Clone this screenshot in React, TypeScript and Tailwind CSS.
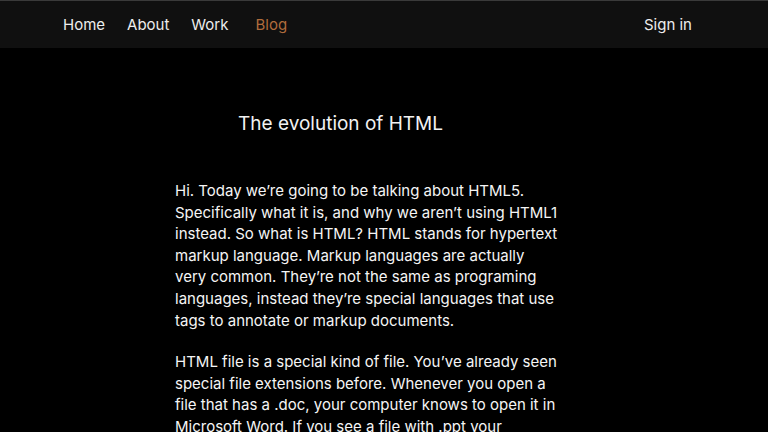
const navLinks = [
  { label: 'Home', gap: '' },
  { label: 'About', gap: 'ml-[22px]' },
  { label: 'Work', gap: 'ml-[22px]' },
  { label: 'Blog', gap: 'ml-[27px]' },
];

const paragraphs = [
  [
    'Hi. Today we\u2019re going to be talking about HTML5.',
    'Specifically what it is, and why we aren\u2019t using HTML1',
    'instead. So what is HTML? HTML stands for hypertext',
    'markup language. Markup languages are actually',
    'very common. They\u2019re not the same as programing',
    'languages, instead they\u2019re special languages that use',
    'tags to annotate or markup documents.',
  ],
  [
    'HTML file is a special kind of file. You\u2019ve already seen',
    'special file extensions before. Whenever you open a',
    'file that has a .doc, your computer knows to open it in',
    'Microsoft Word. If you see a file with .ppt your',
  ],
];

export default function App() {
  return (
    <div className="h-[432px] overflow-hidden bg-black text-white font-['Inter',sans-serif]">
      <nav className="border-t border-[#3a3a3a] bg-[#101010]">
        <div className="flex h-[47px] items-center justify-between pl-[63px] pr-[76px] pt-[1px] text-[15px]">
          <div className="flex items-center">
            {navLinks.map((link) => (
              <a
                key={link.label}
                href="#"
                className={link.gap + (link.label === 'Blog' ? ' text-[#b06c3c]' : ' text-[#ededed]')}
              >
                {link.label}
              </a>
            ))}
          </div>
          <a href="#" className="text-[#ededed]">Sign in</a>
        </div>
      </nav>

      <main className="pl-[175px]">
        <h1 className="ml-[63px] mt-[63px] text-[19px] leading-[26px] text-[#f2f2f2]">
          The evolution of HTML
        </h1>
        <article className="mt-[43px] text-[15px] leading-[21.6px] text-[#f5f5f5]">
          {paragraphs.map((lines, p) => (
            <p key={p} className={p > 0 ? 'mt-[20px]' : ''}>
              {lines.map((line) => (
                <span key={line} className="block whitespace-nowrap">{line}</span>
              ))}
            </p>
          ))}
        </article>
      </main>
    </div>
  );
}
